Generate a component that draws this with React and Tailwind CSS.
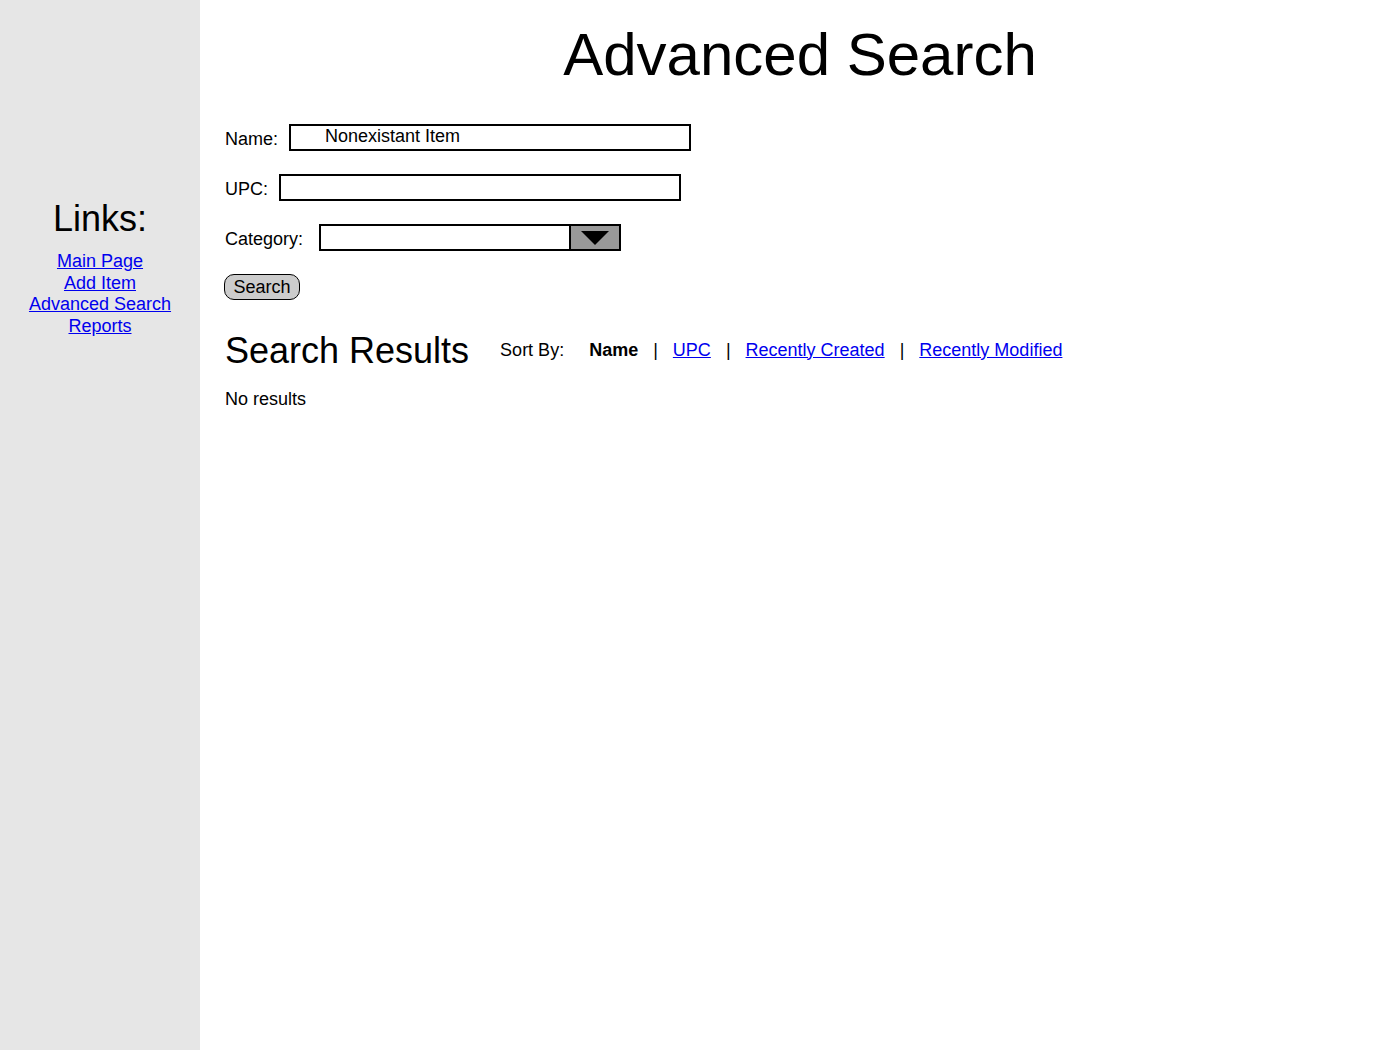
const sidebarLinks = ["Main Page", "Add Item", "Advanced Search", "Reports"];

export default function App() {
  return (
    <div className="flex h-[1050px] w-[1400px] bg-white text-black font-['Liberation_Sans',Arial,sans-serif]">
      <aside className="w-[200px] shrink-0 bg-[#e6e6e6] pt-[198px] flex flex-col items-center">
        <h2 className="text-[36px] leading-[41px]">Links:</h2>
        <nav className="mt-[12px] flex flex-col items-center text-[18px] leading-[21.7px]">
          {sidebarLinks.map((l) => (
            <a key={l} href="#" className="text-[#0000ee] underline">{l}</a>
          ))}
        </nav>
      </aside>

      <main className="flex-1 pl-[25px]">
        <h1 className="mt-[20px] text-center text-[60px] leading-[69px] pr-[25px]">Advanced Search</h1>

        <div className="mt-[35px] flex flex-col gap-[23px] text-[18px]">
          <div className="flex items-center h-[27px]">
            <span className="mt-[3px]">Name:</span>
            <div className="ml-[11px] w-[402px] h-[27px] border-2 border-black pl-[34px] leading-[20px]">Nonexistant Item</div>
          </div>
          <div className="flex items-center h-[27px]">
            <span className="mt-[3px]">UPC:</span>
            <div className="ml-[11px] w-[402px] h-[27px] border-2 border-black" />
          </div>
          <div className="flex items-center h-[27px]">
            <span className="mt-[3px]">Category:</span>
            <div className="ml-[16px] w-[302px] h-[27px] border-2 border-black flex">
              <div className="flex-1" />
              <div className="w-[50px] bg-[#999999] border-l-2 border-black flex items-center justify-center">
                <svg width="28" height="14" viewBox="0 0 28 14"><path d="M0 0H28L14 14Z" fill="#000" /></svg>
              </div>
            </div>
          </div>
          <div>
            <button className="h-[26px] w-[76px] -ml-[1px] rounded-[10px] border border-black bg-[#cccccc] text-[18px] leading-[22px]">Search</button>
          </div>
        </div>

        <div className="mt-[28px] flex items-center h-[42px] text-[18px]">
          <h2 className="text-[36px] leading-[41px]">Search Results</h2>
          <span className="ml-[31px]">Sort By:</span>
          <span className="ml-[25px] font-bold">Name</span>
          <span className="ml-[15px]">|</span>
          <a href="#" className="ml-[15px] text-[#0000ee] underline">UPC</a>
          <span className="ml-[15px]">|</span>
          <a href="#" className="ml-[15px] text-[#0000ee] underline">Recently Created</a>
          <span className="ml-[15px]">|</span>
          <a href="#" className="ml-[15px] text-[#0000ee] underline">Recently Modified</a>
        </div>

        <p className="mt-[15px] text-[18px]">No results</p>
      </main>
    </div>
  );
}
